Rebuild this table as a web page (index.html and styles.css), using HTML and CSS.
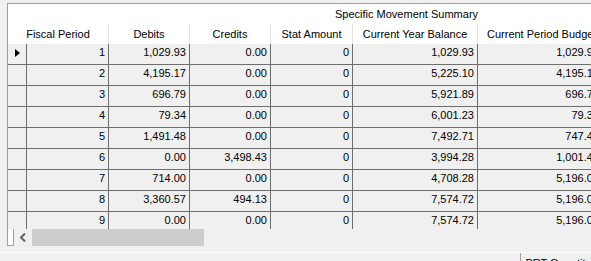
FILE: index.html
```html
<!DOCTYPE html>
<html>
<head>
<meta charset="utf-8">
<link rel="stylesheet" href="styles.css">
</head>
<body>
<div class="grid">
  <div class="head">
    <div class="group-row"><span class="group-title">Specific Movement Summary</span></div>
    <div class="col-row">
      <div class="hc hc-first">Fiscal Period</div>
      <div class="hc w2">Debits</div>
      <div class="hc w3">Credits</div>
      <div class="hc w4">Stat Amount</div>
      <div class="hc w5">Current Year Balance</div>
      <div class="hc w6 last">Current Period Budget</div>
    </div>
  </div>
  <div class="body">
    <div class="row"><div class="rh"><span class="arrow"></span></div><div class="c w1">1</div><div class="c w2">1,029.93</div><div class="c w3">0.00</div><div class="c w4">0</div><div class="c w5">1,029.93</div><div class="c w6">1,029.93</div></div>
    <div class="row"><div class="rh"></div><div class="c w1">2</div><div class="c w2">4,195.17</div><div class="c w3">0.00</div><div class="c w4">0</div><div class="c w5">5,225.10</div><div class="c w6">4,195.17</div></div>
    <div class="row"><div class="rh"></div><div class="c w1">3</div><div class="c w2">696.79</div><div class="c w3">0.00</div><div class="c w4">0</div><div class="c w5">5,921.89</div><div class="c w6">696.79</div></div>
    <div class="row"><div class="rh"></div><div class="c w1">4</div><div class="c w2">79.34</div><div class="c w3">0.00</div><div class="c w4">0</div><div class="c w5">6,001.23</div><div class="c w6">79.34</div></div>
    <div class="row"><div class="rh"></div><div class="c w1">5</div><div class="c w2">1,491.48</div><div class="c w3">0.00</div><div class="c w4">0</div><div class="c w5">7,492.71</div><div class="c w6">747.48</div></div>
    <div class="row"><div class="rh"></div><div class="c w1">6</div><div class="c w2">0.00</div><div class="c w3">3,498.43</div><div class="c w4">0</div><div class="c w5">3,994.28</div><div class="c w6">1,001.43</div></div>
    <div class="row"><div class="rh"></div><div class="c w1">7</div><div class="c w2">714.00</div><div class="c w3">0.00</div><div class="c w4">0</div><div class="c w5">4,708.28</div><div class="c w6">5,196.00</div></div>
    <div class="row"><div class="rh"></div><div class="c w1">8</div><div class="c w2">3,360.57</div><div class="c w3">494.13</div><div class="c w4">0</div><div class="c w5">7,574.72</div><div class="c w6">5,196.00</div></div>
    <div class="row"><div class="rh"></div><div class="c w1">9</div><div class="c w2">0.00</div><div class="c w3">0.00</div><div class="c w4">0</div><div class="c w5">7,574.72</div><div class="c w6">5,196.00</div></div>
  </div>
  <div class="hscroll">
    <div class="corner"></div>
    <div class="sb-btn"><svg width="8" height="9" viewBox="0 0 8 9"><path d="M6 0.5 L2 4.5 L6 8.5" fill="none" stroke="#606060" stroke-width="2"/></svg></div>
    <div class="thumb"></div>
    <div class="track"></div>
  </div>
</div>
<div class="footer">
  <div class="footer-fill"></div>
  <div class="footer-cell">PRT Quantity</div>
</div>
</body>
</html>
```
FILE: styles.css
```css
html, body {
  margin: 0;
  padding: 0;
}
body {
  width: 591px;
  height: 261px;
  overflow: hidden;
  background: #f0f0f0;
  font-family: "Liberation Sans", Arial, sans-serif;
  font-size: 11px;
  color: #000;
}
.grid {
  margin: 3px 0 0 7px;
  width: 700px;
  border-left: 1px solid #a0a0a0;
  border-top: 1px solid #a0a0a0;
}
.head {
  background: #fff;
  height: 40px;
}
.group-row {
  height: 20px;
  display: flex;
  align-items: center;
}
.group-title {
  margin-left: 327px;
  white-space: nowrap;
}
.col-row {
  height: 20px;
  display: flex;
}
.hc {
  box-sizing: border-box;
  border-right: 1px solid #e3e3e3;
  display: flex;
  align-items: center;
  justify-content: center;
  white-space: nowrap;
  overflow: hidden;
}
.hc-first { width: 101px; }
.w1 { width: 82px; }
.w2 { width: 81px; }
.w3 { width: 81px; }
.w4 { width: 82px; }
.w5 { width: 125px; }
.w6 { width: 125px; }
.hc.last { justify-content: flex-start; padding-left: 9px; }
.body {
  height: 185px;
  overflow: hidden;
  background: #f0f0f0;
}
.row {
  display: flex;
  height: 21px;
  box-sizing: border-box;
  border-bottom: 1px solid #6e6e6e;
}
.rh {
  width: 19px;
  box-sizing: border-box;
  border-right: 1px solid #6e6e6e;
  display: flex;
  align-items: center;
  justify-content: center;
  padding-bottom: 2px;
}
.arrow {
  width: 0;
  height: 0;
  border-left: 5px solid #000;
  border-top: 4.5px solid transparent;
  border-bottom: 4.5px solid transparent;
  margin-left: 1px;
}
.c {
  box-sizing: border-box;
  border-right: 1px solid #6e6e6e;
  padding-right: 3px;
  padding-bottom: 4px;
  display: flex;
  align-items: center;
  justify-content: flex-end;
  white-space: nowrap;
}
.hscroll {
  height: 17px;
  display: flex;
}
.corner {
  width: 6px;
  box-sizing: border-box;
  background: #fff;
  border-right: 1px solid #a0a0a0;
  border-bottom: 1px solid #a0a0a0;
}
.sb-btn {
  width: 18px;
  display: flex;
  align-items: center;
  justify-content: center;
  background: #f0f0f0;
}
.thumb {
  width: 172px;
  background: #cdcdcd;
}
.track {
  flex: 1;
  background: #f0f0f0;
}
.footer {
  margin-top: 6px;
  border-top: 1px solid #fff;
  display: flex;
  height: 20px;
}
.footer-fill {
  width: 529px;
}
.footer-cell {
  border-left: 1px solid #a0a0a0;
  padding: 4px 0 0 4px;
  white-space: nowrap;
}
```
